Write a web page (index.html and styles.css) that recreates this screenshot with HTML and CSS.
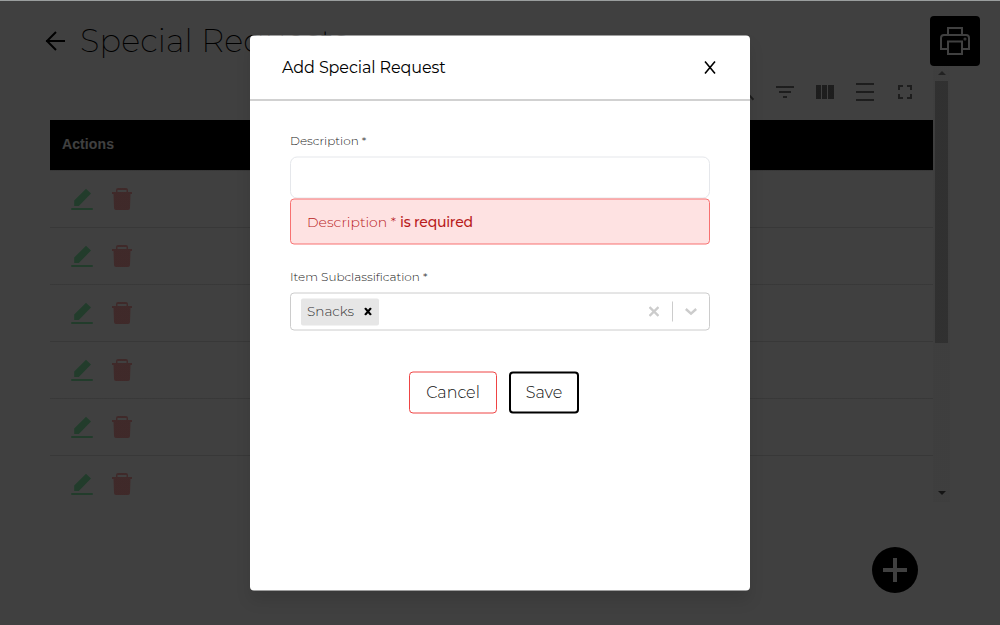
FILE: index.html
```html
<!DOCTYPE html>
<html lang="en">
<head>
<meta charset="utf-8">
<title>Special Requests</title>
<link rel="stylesheet" href="styles.css">
</head>
<body>
<svg class="defs" width="0" height="0">
  <symbol id="edit" viewBox="0 0 22 24"><path d="M3.200 18V12.500L15 .8L20 5.600L8.800 17L7.800 18Z"/><rect x="0" y="20" width="22" height="2" rx="1"/></symbol>
  <symbol id="trash" viewBox="0 0 20 22"><path d="M4 4V2Q4 0 6 0H14Q16 0 16 2V4H20V6H18.500L18 20Q18 22 16 22H4Q2 22 2 20L1.500 6H0V4ZM5.500 4H14.500V2H5.500Z" fill-rule="evenodd"/></symbol>
</svg>
<main class="page">
  <header class="page-head">
    <svg class="back" width="20" height="20" viewBox="0 0 20 20"><path d="M20 10H1M11 1L2 10L11 19"/></svg>
    <h1 class="page-title">Special Requests</h1>
    <button class="print"><svg width="30" height="30" viewBox="0 0 30 30"><path d="M8 23H1V12Q1 9 4 9H26Q29 9 29 12V23H22M8 9V2H22V9M8 15.500H22V28H8Z"/><circle cx="25" cy="13" r=".5"/></svg></button>
  </header>
  <section class="table">
    <div class="tools">
      <svg width="24" height="24" viewBox="0 0 24 24"><path d="M14 14L19.700 20.500L21.200 19L15.500 13Z"/></svg>
      <svg width="24" height="24" viewBox="0 0 24 24"><path d="M3 6H21V8H3ZM6 11H18V13H6ZM10 16H14V18H10Z"/></svg>
      <svg width="24" height="24" viewBox="0 0 24 24"><path d="M3 5H8V19H3ZM9 5H14V19H9ZM15 5H21V19H15Z"/></svg>
      <svg width="24" height="24" viewBox="0 0 24 24"><path d="M3 3H21V5H3ZM3 11H21V13H3ZM3 19H21V21H3Z"/></svg>
      <svg width="24" height="24" viewBox="0 0 24 24"><path d="M5 5H10V7H7V10H5ZM14 5H19V10H17V7H14ZM5 14H7V17H10V19H5ZM17 14H19V19H14V17H17Z"/></svg>
    </div>
    <div class="thead">Actions</div>
    <div class="row"><svg class="edit"><use href="#edit"/></svg><svg class="trash"><use href="#trash"/></svg></div>
    <div class="row"><svg class="edit"><use href="#edit"/></svg><svg class="trash"><use href="#trash"/></svg></div>
    <div class="row"><svg class="edit"><use href="#edit"/></svg><svg class="trash"><use href="#trash"/></svg></div>
    <div class="row"><svg class="edit"><use href="#edit"/></svg><svg class="trash"><use href="#trash"/></svg></div>
    <div class="row"><svg class="edit"><use href="#edit"/></svg><svg class="trash"><use href="#trash"/></svg></div>
    <div class="row"><svg class="edit"><use href="#edit"/></svg><svg class="trash"><use href="#trash"/></svg></div>
  </section>
  <div class="scrollbar"><i class="up"></i><i class="thumb"></i><i class="down"></i></div>
  <button class="add"><svg width="24" height="24" viewBox="0 0 24 24"><path d="M12 0V24M0 12H24"/></svg></button>
</main>
<div class="overlay">
  <div class="modal" role="dialog">
    <div class="modal-head">
      <h2 class="modal-title">Add Special Request</h2>
      <svg class="close" width="12" height="14" viewBox="0 0 12 14"><path d="M1 1L11 13M11 1L1 13"/></svg>
    </div>
    <form class="form">
      <label class="label">Description *</label>
      <div class="input"></div>
      <div class="error"><span>Description *</span><span class="error-text">is required</span></div>
      <label class="label label-item">Item Subclassification *</label>
      <div class="select">
        <div class="chip"><span class="chip-text">Snacks</span><svg width="8" height="8" viewBox="0 0 8 8"><path d="M1 .5L7 7.500M7 .5L1 7.500"/></svg></div>
        <div class="controls">
          <svg width="10" height="12" viewBox="0 0 10 12"><path d="M.5 1.500L9.500 10.500M9.500 1.500L.5 10.500"/></svg>
          <i class="divider"></i>
          <svg width="12" height="8" viewBox="0 0 12 8"><path d="M.8 1.500L6 6.200L11.200 1.500"/></svg>
        </div>
      </div>
      <div class="buttons">
        <button type="button" class="btn cancel">Cancel</button>
        <button type="button" class="btn save">Save</button>
      </div>
    </form>
  </div>
</div>
</body>
</html>
```
FILE: styles.css
```css
* { box-sizing: border-box; }
body { margin: 0; background: #fff; font-family: Montserrat, Inter, sans-serif; font-weight: 300; overflow: hidden; }
button { border: 0; padding: 0; font: inherit; }
.defs { display: block; position: absolute; }
.page { position: relative; height: 625px; padding-left: 45px; }
.page-head { display: flex; align-items: center; height: 80px; padding-right: 20px; }
.back { fill: none; stroke: #000; stroke-width: 2; margin-top: 2px; }
.page-title { margin: 1px 0 0 15px; font-size: 32px; font-weight: 200; letter-spacing: .15px; white-space: nowrap; }
.print { display: flex; align-items: center; justify-content: center; width: 50px; height: 50px; margin: 2px 0 0 auto; border-radius: 4px; background: #000; position: relative; z-index: 1; }
.print svg { fill: none; stroke: #fff; stroke-width: 2; }
.table { width: 883px; margin-left: 5px; }
.tools { display: flex; justify-content: flex-end; gap: 16px; height: 40px; padding-right: 16px; fill: #757575; }
.thead { height: 51px; padding-left: 12px; background: #000; border-bottom: 1px solid #e0e0e0; color: #fff; font: bold 14px/48px "Liberation Sans", sans-serif; letter-spacing: .1px; }
.row { display: flex; align-items: center; gap: 19px; height: 57px; padding-left: 21px; border-bottom: 1px solid #e0e0e0; }
.row:last-child { border-color: transparent; }
.edit { width: 22px; height: 24px; fill: #86efac; margin-top: 2px; }
.trash { width: 20px; height: 22px; fill: #fca5a5; }
.scrollbar { position: absolute; left: 933px; top: 66px; width: 17px; height: 436px; padding: 5px 2px 7px; display: flex; flex-direction: column; align-items: center; background: #f8f8f8; }
.up, .down { width: 0; border: 4px solid transparent; }
.up { height: 4px; border-top: 0; border-bottom-color: #858585; }
.down { height: 4px; margin-top: auto; border-bottom: 0; border-top-color: #505050; }
.thumb { width: 13px; height: 262px; margin-top: 6px; background: #c1c1c1; }
.add { position: absolute; left: 872px; top: 547px; width: 46px; height: 46px; border-radius: 50%; background: #000; display: flex; align-items: center; justify-content: center; }
.add svg { stroke: #fff; stroke-width: 4; }
.overlay { position: absolute; inset: 0; z-index: 2; background: linear-gradient(#9a9e9e 1px, rgba(0,0,0,.75) 1px); display: flex; justify-content: center; align-items: flex-start; padding-top: 35px; }
.modal { transform: translateY(.5px); width: 500px; height: 555px; background: #fff; border-radius: 4px; box-shadow: 0 10px 15px rgba(0,0,0,.1); }
.modal-head { display: flex; justify-content: space-between; align-items: center; height: 65px; padding: 0 34px 0 32px; border-bottom: 1px solid #a3a3a3; }
.modal-title { margin: 0; padding-bottom: 2px; font-size: 16px; font-weight: 400; letter-spacing: -.1px; }
.close { fill: none; stroke: #000; stroke-width: 1.6; }
.form { padding: 32px 40px; }
.label { display: block; height: 24px; font-size: 12px; line-height: 16px; color: #222; }
.input { height: 42px; border: 1px solid #e5e7eb; border-radius: 7px; }
.error { display: flex; align-items: center; gap: 4px; height: 46px; padding: 0 0 1px 16px; border: 1px solid #f87171; border-radius: 4px; background: #fee2e2; color: #b91c1c; font-size: 14px; }
.error-text { font-weight: 500; letter-spacing: -.25px; }
.label-item { margin-top: 24px; }
.select { display: flex; align-items: center; justify-content: space-between; height: 38px; padding: 0 12px 0 10px; border: 1px solid #ccc; border-radius: 4px; }
.chip { display: flex; align-items: center; justify-content: space-between; width: 78px; height: 27px; padding: 0 7px 0 6px; border-radius: 2px; background: #e6e6e6; color: #333; font-size: 13.6px; }
.chip-text { padding-bottom: 2px; }
.chip svg { stroke: #000; stroke-width: 2; }
.controls { display: flex; align-items: center; fill: none; stroke: #ccc; stroke-width: 2.4; }
.divider { width: 1px; height: 20px; margin: 0 12px 0 13px; background: #ccc; }
.buttons { display: flex; gap: 12px; margin: 41px 0 0 119px; }
.btn { height: 42px; padding-bottom: 2px; border-radius: 4px; background: #fff; font-size: 16px; color: #111; }
.cancel { width: 88px; border: 1px solid #ef4444; }
.save { width: 70px; border: 2px solid #000; }
```
